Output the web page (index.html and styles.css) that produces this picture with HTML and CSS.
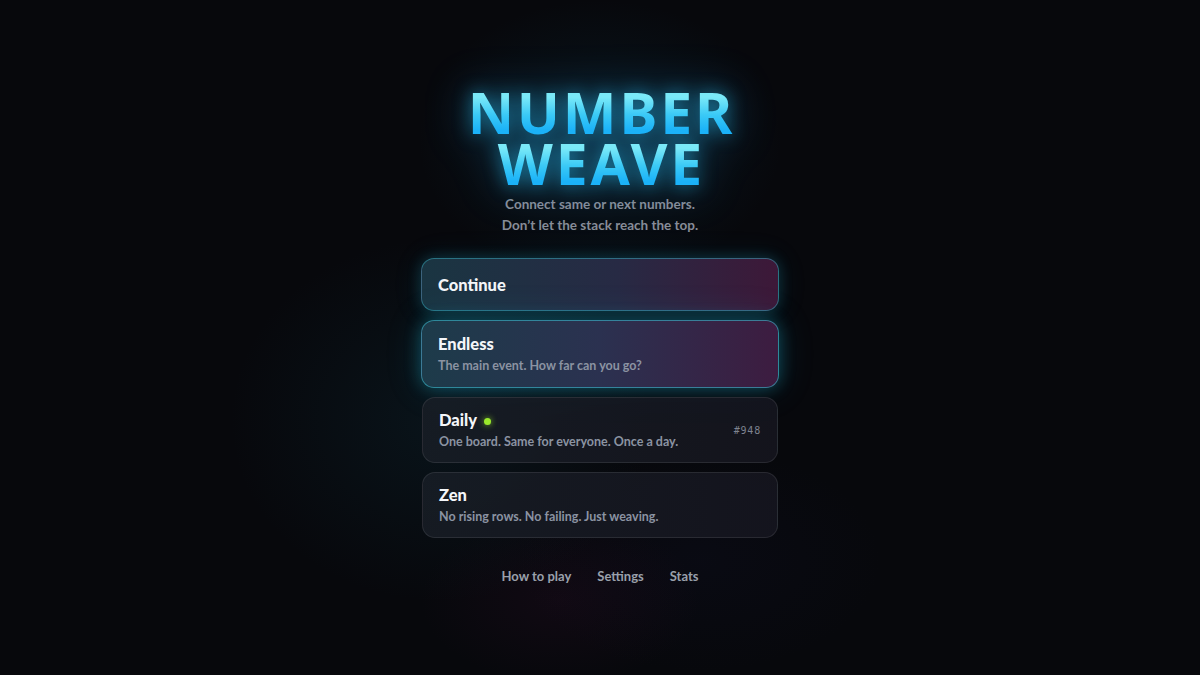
FILE: index.html
```html
<!DOCTYPE html>
<html lang="en">
<head>
<meta charset="utf-8">
<title>Number Weave</title>
<link rel="stylesheet" href="styles.css">
</head>
<body>
<div class="bg"></div>
<main class="menu">
  <header class="brand">
    <h1 class="title"><span>NUMBER</span><span>WEAVE</span></h1>
    <p class="tagline">Connect same or next numbers.<br>Don’t let the stack reach the top.</p>
  </header>
  <nav class="modes">
    <button class="card card-accent card-continue"><span class="card-title">Continue</span></button>
    <button class="card card-accent card-endless">
      <span class="card-title">Endless</span>
      <span class="card-desc">The main event. How far can you go?</span>
    </button>
    <button class="card card-plain">
      <span class="card-body">
        <span class="card-title">Daily <i class="dot"></i></span>
        <span class="card-desc">One board. Same for everyone. Once a day.</span>
      </span>
      <span class="card-tag">#948</span>
    </button>
    <button class="card card-plain">
      <span class="card-body">
        <span class="card-title">Zen</span>
        <span class="card-desc">No rising rows. No failing. Just weaving.</span>
      </span>
    </button>
  </nav>
  <footer class="links">
    <a href="#">How to play</a>
    <a href="#">Settings</a>
    <a href="#">Stats</a>
  </footer>
</main>
</body>
</html>
```
FILE: styles.css
```css
* { box-sizing: border-box; }
html, body { margin: 0; height: 100%; }
body {
  background: #07080c;
  font-family: Lato, "Noto Sans", sans-serif;
  color: #f2f4f7;
  overflow: hidden;
  position: relative;
}
.bg {
  position: absolute;
  inset: 0;
  background:
    radial-gradient(ellipse 260px 200px at 600px 140px, rgba(20, 90, 120, 0.18), transparent 70%),
    radial-gradient(ellipse 300px 260px at 440px 420px, rgba(20, 80, 100, 0.16), transparent 70%),
    radial-gradient(ellipse 200px 120px at 560px 600px, rgba(90, 20, 70, 0.12), transparent 70%),
    radial-gradient(ellipse 260px 160px at 700px 560px, rgba(30, 30, 80, 0.10), transparent 70%);
  pointer-events: none;
}
.menu {
  position: relative;
  width: 358px;
  margin: 0 auto;
  padding-top: 87px;
  display: flex;
  flex-direction: column;
  align-items: stretch;
}
.brand { text-align: center; }
.title {
  margin: 0;
  display: flex;
  flex-direction: column;
  align-items: center;
  font-family: "Noto Sans", "Open Sans", sans-serif;
  font-weight: 700;
  font-size: 57px;
  line-height: 51px;
  letter-spacing: 0.05em;
  filter: drop-shadow(0 0 9px rgba(40, 190, 240, 0.6)) drop-shadow(0 0 22px rgba(30, 150, 220, 0.38));
}
.title span {
  display: block;
  padding-left: 0.05em;
  background: linear-gradient(180deg, #7ae9f8 20%, #3ac9f6 55%, #1bb2f8 85%);
  -webkit-background-clip: text;
  background-clip: text;
  color: transparent;
}
.tagline {
  margin: 5px 0 0;
  font-size: 13.5px;
  line-height: 21px;
  font-weight: 700;
  color: #888d98;
}
.modes {
  margin-top: 22px;
  display: flex;
  flex-direction: column;
  gap: 9px;
}
.card {
  font: inherit;
  color: inherit;
  text-align: left;
  border-radius: 13px;
  padding: 13px 16px;
  display: flex;
  flex-direction: column;
  gap: 3px;
  cursor: pointer;
}
.card-accent {
  border: 1px solid rgba(60, 190, 210, 0.45);
  background: linear-gradient(90deg, #1a3542 0%, #272a44 55%, #3d1838 100%);
  box-shadow: 0 0 14px rgba(30, 170, 200, 0.25), 0 0 30px rgba(30, 150, 190, 0.12);
}
.card-continue { height: 53px; justify-content: center; padding: 0 16px; }
.card-endless {
  height: 68px;
  background: linear-gradient(90deg, #1d3b4a 0%, #2b3150 50%, #3d1c40 100%);
  border-color: rgba(60, 200, 220, 0.55);
  box-shadow: 0 0 16px rgba(30, 180, 210, 0.35), 0 0 36px rgba(30, 160, 200, 0.18);
}
.card-plain {
  height: 66px;
  flex-direction: row;
  align-items: center;
  justify-content: space-between;
  padding: 0 16px;
  margin: 0 1px;
  background: linear-gradient(90deg, rgba(24, 30, 38, 0.85), rgba(22, 22, 32, 0.85));
  border: 1px solid rgba(255, 255, 255, 0.09);
}
.card-body { display: flex; flex-direction: column; gap: 3px; }
.card-title {
  font-size: 16.5px;
  line-height: 20px;
  font-weight: 900;
  color: #f4f6f9;
  display: flex;
  align-items: center;
  gap: 7px;
}
.card-desc {
  font-size: 12.5px;
  line-height: 17px;
  font-weight: 700;
  color: #8b93a2;
}
.dot {
  width: 7px;
  height: 7px;
  border-radius: 50%;
  background: #9bea2c;
  box-shadow: 0 0 6px rgba(150, 230, 40, 0.8);
  margin-top: 2px;
}
.card-tag {
  font-family: "DejaVu Sans Mono", "Liberation Mono", monospace;
  font-size: 10px;
  letter-spacing: 0.08em;
  color: #7e8390;
  margin-right: 0;
}
.links {
  margin-top: 30px;
  display: flex;
  justify-content: center;
  gap: 26px;
}
.links a {
  font-size: 13px;
  font-weight: 700;
  color: #9aa0ab;
  text-decoration: none;
}
```
